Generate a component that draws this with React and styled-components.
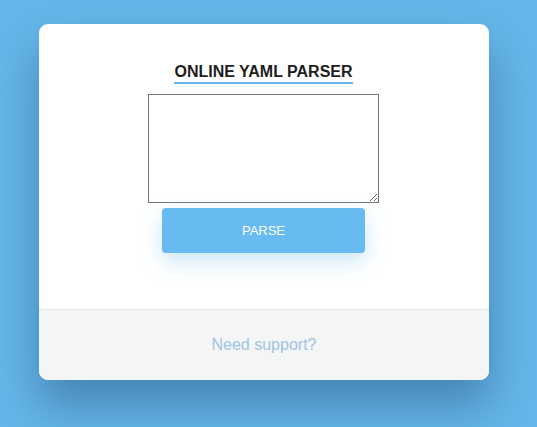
import React from 'react';
import styled, { createGlobalStyle } from 'styled-components';

const GlobalStyle = createGlobalStyle`
  html, body {
    margin: 0;
    padding: 0;
    height: 100%;
  }
  body {
    background: #65b6ea;
    font-family: "Liberation Sans", Arial, sans-serif;
  }
`;

const Page = styled.div`
  min-height: 427px;
  padding: 24px 9px 0 0;
  box-sizing: border-box;
  display: flex;
  justify-content: center;
  align-items: flex-start;
`;

const Card = styled.div`
  width: 450px;
  height: 356px;
  background: #fff;
  border-radius: 9px;
  overflow: hidden;
  display: flex;
  flex-direction: column;
  box-shadow: 0 25px 45px rgba(30, 70, 110, 0.45);
`;

const Body = styled.div`
  flex: 1;
  display: flex;
  flex-direction: column;
  align-items: center;
  padding: 39px 1px 0 0;
`;

const Title = styled.h1`
  margin: 0;
  font-size: 16px;
  font-weight: bold;
  color: #1d1d1d;
  line-height: 18px;
  padding-bottom: 1px;
  border-bottom: 2px solid #65b6ea;
`;

const Input = styled.textarea`
  margin-top: 10px;
  width: 231px;
  height: 109px;
  box-sizing: border-box;
  border: 1px solid #767676;
  padding: 2px;
  font-family: "Liberation Mono", monospace;
  font-size: 13px;
  outline: none;
  resize: both;
`;

const Button = styled.button`
  margin-top: 5px;
  width: 203px;
  height: 45px;
  border: none;
  border-radius: 4px;
  background: #67bbf0;
  color: #fff;
  font-family: "Liberation Sans", Arial, sans-serif;
  font-size: 13px;
  box-shadow: 0 8px 20px rgba(101, 182, 234, 0.35);
  cursor: pointer;
`;

const Footer = styled.div`
  height: 70px;
  border-top: 1px solid #e2e8ec;
  background: #f4f5f5;
  display: flex;
  align-items: center;
  justify-content: center;
`;

const SupportLink = styled.a`
  color: #a0c3e6;
  font-size: 16px;
  text-decoration: none;
  cursor: pointer;
`;

export default function App() {
  return (
    <>
      <GlobalStyle />
      <Page>
        <Card>
          <Body>
            <Title>ONLINE YAML PARSER</Title>
            <Input />
            <Button>PARSE</Button>
          </Body>
          <Footer>
            <SupportLink>Need support?</SupportLink>
          </Footer>
        </Card>
      </Page>
    </>
  );
}
